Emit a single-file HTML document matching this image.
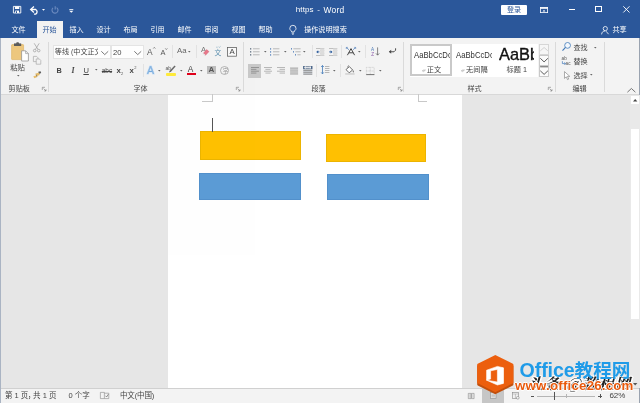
<!DOCTYPE html>
<html lang="zh-CN">
<head>
<meta charset="utf-8">
<title>https - Word</title>
<style>
*{box-sizing:border-box;margin:0;padding:0}
html,body{width:640px;height:403px;overflow:hidden;background:#e6e6e6}
body{position:relative;font-family:"Liberation Sans","Noto Sans CJK SC",sans-serif;font-size:7.1px;color:#444;line-height:1}
.a{position:absolute;white-space:nowrap}
.t{position:absolute;white-space:nowrap;line-height:10px;height:10px}
#title{left:0;top:0;width:640px;height:38px;background:#2b579a}
#ribbon{left:0;top:38px;width:640px;height:57px;background:#f3f3f3;border-bottom:1px solid #d8d8d8}
#doc{left:0;top:95px;width:640px;height:294px;background:#e6e6e6}
#page{left:168px;top:95px;width:294px;height:294px;background:#fff}
#status{left:0;top:388px;width:640px;height:15px;background:#f3f3f3;border-top:1px solid #d0d0d0}
.w{color:#fff}
.sep{position:absolute;top:42px;width:1px;height:50px;background:#dadada}
svg{position:absolute;overflow:visible}
</style>
</head>
<body>
<div id="wrap" style="position:absolute;left:0;top:0;width:640px;height:403px;will-change:transform;opacity:0.999">
<div class="a" id="title"></div>
<div class="a" id="ribbon"></div>
<div class="a" id="doc"></div>
<div class="a" id="page"></div>
<div class="a" id="status"></div>

<!-- TITLE BAR -->
<div class="t w" style="left:295.8px;top:4.8px;font-size:8px;letter-spacing:0.1px">https</div><div class="t w" style="left:317.2px;top:4.6px;font-size:8px">-</div><div class="t w" style="left:323.6px;top:4.8px;font-size:8.4px;letter-spacing:0.2px">Word</div>
<div class="a" style="left:501px;top:5px;width:26px;height:9.7px;background:#fff;border-radius:1px"></div>
<div class="t" style="left:506.9px;top:5px;color:#2b579a">登录</div>


<!-- window border -->
<div class="a" style="left:0;top:38px;width:1px;height:365px;background:#aab4c3"></div>
<div class="a" style="left:639px;top:38px;width:1px;height:365px;background:#9aa3b0"></div>
<!-- TITLE ICONS -->
<svg style="left:12.7px;top:6px" width="8.2" height="7.4" viewBox="0 0 8.2 7.4"><path d="M0.4 0.4H7.8V7H0.4Z" fill="#2b579a" stroke="#fff" stroke-width="0.9"/><rect x="1.9" y="0.4" width="4.4" height="2.6" fill="#fff"/><rect x="2.2" y="4.6" width="3.8" height="2.4" fill="#fff"/><rect x="3" y="5.2" width="1" height="1.8" fill="#2b579a"/></svg>
<svg style="left:29.8px;top:6px" width="9.9" height="8.8" viewBox="0 0 9 8"><path d="M1 3.2H5.2A2.4 2.4 0 0 1 5.2 7.4H3.6" fill="none" stroke="#fff" stroke-width="1.2"/><path d="M3.6 0.4L0.6 3.2L3.6 6" fill="none" stroke="#fff" stroke-width="1.2"/></svg>
<svg style="left:41.6px;top:8.5px" width="3" height="2" viewBox="0 0 3 2"><path d="M0 0H3L1.5 1.8Z" fill="#fff"/></svg>
<svg style="left:51.3px;top:6.3px" width="8" height="8" viewBox="0 0 8 8"><path d="M5.6 1.6A3 3 0 1 1 2 1.9" fill="none" stroke="#6e8cc0" stroke-width="1.1"/><path d="M4.2 0.2V3.4" stroke="#6e8cc0" stroke-width="1.1"/></svg>
<svg style="left:69.3px;top:8.6px" width="4.6" height="4" viewBox="0 0 4.6 4"><rect x="0.3" y="0" width="4" height="0.8" fill="#fff"/><path d="M0.2 1.7H4.4L2.3 3.8Z" fill="#fff"/></svg>
<!-- ribbon display -->
<svg style="left:540.4px;top:6.5px" width="8" height="6" viewBox="0 0 8 6"><rect x="0.4" y="0.4" width="7.2" height="5.2" fill="none" stroke="#fff" stroke-width="0.8"/><rect x="0.4" y="0.4" width="7.2" height="1.4" fill="#fff"/><path d="M2.6 4.4L4 2.8L5.4 4.4Z" fill="#fff"/></svg>
<div class="a" style="left:568.5px;top:9.4px;width:6.2px;height:0.9px;background:#fff"></div>
<div class="a" style="left:595.2px;top:6px;width:6.6px;height:6.4px;border:0.9px solid #fff"></div>
<svg style="left:622.8px;top:6.4px" width="6.8" height="6.8" viewBox="0 0 6.8 6.8"><path d="M0.3 0.3L6.5 6.5M6.5 0.3L0.3 6.5" stroke="#fff" stroke-width="0.9"/></svg>
<!-- lightbulb -->
<svg style="left:288.8px;top:25px" width="8" height="10" viewBox="0 0 8 10"><path d="M2.6 7V6.2C1.4 5.4 0.8 4.6 0.8 3.4A3.1 3.1 0 0 1 7 3.4C7 4.6 6.4 5.4 5.2 6.2V7Z" fill="none" stroke="#fff" stroke-width="0.8"/><path d="M2.7 8.2H5.1M3.1 9.3H4.7" stroke="#fff" stroke-width="0.7"/></svg>
<!-- share -->
<svg style="left:601.3px;top:25.6px" width="8" height="8.6" viewBox="0 0 8 8.6"><circle cx="4.3" cy="2.6" r="2.1" fill="none" stroke="#fff" stroke-width="0.8"/><path d="M0.6 8.4C0.8 6 2.2 5 4 5" fill="none" stroke="#fff" stroke-width="0.8"/><path d="M5 5.2L7.6 8.2" stroke="#fff" stroke-width="0.8"/></svg>

<!-- TABS -->
<div class="a" style="left:36.5px;top:21px;width:26px;height:18px;background:#f3f3f3"></div>
<div class="t w" style="left:11.4px;top:24.5px">文件</div>
<div class="t" style="left:42.4px;top:24.5px;color:#2b579a">开始</div>
<div class="t w" style="left:69.4px;top:24.5px">插入</div>
<div class="t w" style="left:96.4px;top:24.5px">设计</div>
<div class="t w" style="left:123.4px;top:24.5px">布局</div>
<div class="t w" style="left:150.4px;top:24.5px">引用</div>
<div class="t w" style="left:177.4px;top:24.5px">邮件</div>
<div class="t w" style="left:204.4px;top:24.5px">审阅</div>
<div class="t w" style="left:231.4px;top:24.5px">视图</div>
<div class="t w" style="left:258.4px;top:24.5px">帮助</div>
<div class="t w" style="left:304.2px;top:24.5px">操作说明搜索</div>
<div class="t w" style="left:612.4px;top:24.5px">共享</div>

<!-- RIBBON LABELS -->
<div class="t" style="left:8.6px;top:84px">剪贴板</div>
<div class="t" style="left:133.4px;top:84px">字体</div>
<div class="t" style="left:311.4px;top:84px">段落</div>
<div class="t" style="left:467.4px;top:84px">样式</div>
<div class="t" style="left:572.4px;top:84px">编辑</div>
<div class="sep" style="left:48px"></div>
<div class="sep" style="left:243px"></div>
<div class="sep" style="left:403px"></div>
<div class="sep" style="left:555px"></div>
<div class="sep" style="left:604px"></div>

<!-- CLIPBOARD -->
<div class="t" style="left:10.2px;top:62.8px;font-size:7.4px">粘贴</div>


<!-- paste icon -->
<svg style="left:10px;top:42.2px" width="19" height="20" viewBox="0 0 19 20"><rect x="1.6" y="2.6" width="12" height="15" rx="0.6" fill="#eec77e" stroke="#dcae58" stroke-width="0.6"/><rect x="4" y="1.4" width="7.2" height="2.6" fill="#5b5b5b"/><rect x="6.2" y="0.3" width="2.8" height="2" rx="0.9" fill="#5b5b5b"/><path d="M11.6 8.8H15.6L18.4 11.6V19H11.6Z" fill="#fff" stroke="#8a8a8a" stroke-width="0.7"/><path d="M15.6 8.8V11.6H18.4" fill="none" stroke="#8a8a8a" stroke-width="0.6"/></svg>
<svg style="left:16.7px;top:75.2px" width="2.6" height="1.6" viewBox="0 0 2.6 1.6"><path d="M0 0H2.6L1.3 1.6Z" fill="#666"/></svg>
<!-- cut -->
<svg style="left:33.2px;top:42.8px" width="7.4" height="9.4" viewBox="0 0 7.4 9.4"><path d="M1.2 0.3L5 6.4M6.2 0.3L2.4 6.4" stroke="#9a9a9a" stroke-width="0.7"/><circle cx="1.7" cy="7.6" r="1.3" fill="none" stroke="#9a9a9a" stroke-width="0.7"/><circle cx="5.7" cy="7.6" r="1.3" fill="none" stroke="#9a9a9a" stroke-width="0.7"/></svg>
<!-- copy -->
<svg style="left:32.8px;top:56.2px" width="8.4" height="8.6" viewBox="0 0 8.4 8.6"><path d="M0.4 0.4H3.6L5 1.8V5.6H0.4Z" fill="#f3f3f3" stroke="#a8a8a8" stroke-width="0.7"/><path d="M3.2 3H6.4L7.8 4.4V8.2H3.2Z" fill="#f3f3f3" stroke="#a8a8a8" stroke-width="0.7"/></svg>
<!-- format painter -->
<svg style="left:32.8px;top:70.6px" width="8.6" height="7.4" viewBox="0 0 8.6 7.4"><path d="M5.2 0.8L7.6 0.2L8.2 2L6 3Z" fill="#5f5f5f"/><path d="M2.4 2.6L6 1.8L6.8 4L3.4 5.2Z" fill="#e8bd6a"/><path d="M0.4 5.2L3.6 4.2L4.4 6L1.2 7.2Z" fill="#e8bd6a"/><path d="M3.2 3.6L4 5.6" stroke="#5f5f5f" stroke-width="0.6"/></svg>
<svg style="left:41.5px;top:87.2px" width="4.6" height="4.6" viewBox="0 0 4.6 4.6"><path d="M0.3 3V0.3H3" fill="none" stroke="#777" stroke-width="0.6"/><path d="M1.6 1.6L4 4M4 2.2V4H2.2" fill="none" stroke="#777" stroke-width="0.6"/></svg>
<!-- FONT GROUP -->
<div class="a" style="left:53.4px;top:45.2px;width:57.6px;height:13.4px;background:#fff;border:0.6px solid #e4e4e4"></div>
<div class="a" style="left:111px;top:45.2px;width:32.8px;height:13.4px;background:#fff;border:0.6px solid #e4e4e4"></div>
<div class="t" style="left:54.8px;top:47.4px;width:43.2px;overflow:hidden">等线 (中文正文)</div>
<div class="t" style="left:113px;top:47.7px;font-size:7.6px">20</div>

<svg style="left:101.2px;top:50.9px" width="7.5" height="4" viewBox="0 0 7.5 4"><path d="M0.3 0.3L3.75 3.6L7.2 0.3" fill="none" stroke="#555" stroke-width="0.8"/></svg><svg style="left:133.6px;top:50.9px" width="7.5" height="4" viewBox="0 0 7.5 4"><path d="M0.3 0.3L3.75 3.6L7.2 0.3" fill="none" stroke="#555" stroke-width="0.8"/></svg>
<!-- grow / shrink -->
<div class="t" style="left:147px;top:47px;font-size:8.4px;color:#555">A</div>
<svg style="left:152.6px;top:47.4px" width="2.6" height="1.8" viewBox="0 0 2.6 1.8"><path d="M0.2 1.6L1.3 0.3L2.4 1.6" fill="none" stroke="#555" stroke-width="0.6"/></svg>
<div class="t" style="left:160.4px;top:47.6px;font-size:7.4px;color:#555">A</div>
<svg style="left:165.2px;top:47.6px" width="2.6" height="1.8" viewBox="0 0 2.6 1.8"><path d="M0.2 0.3L1.3 1.6L2.4 0.3" fill="none" stroke="#555" stroke-width="0.6"/></svg>
<div class="a" style="left:172px;top:45px;width:1px;height:13px;background:#e2e2e2"></div>
<div class="t" style="left:177px;top:46.4px;font-size:7.8px;color:#666">Aa</div>
<svg style="left:188.1px;top:50.800000000000004px" width="2.6" height="1.6" viewBox="0 0 2.6 1.6"><path d="M0 0H2.6L1.3 1.6Z" fill="#666"/></svg>
<div class="a" style="left:196px;top:45px;width:1px;height:13px;background:#e2e2e2"></div>
<!-- clear formatting -->
<div class="t" style="left:201px;top:45.4px;font-size:7.6px;color:#777">A</div>
<svg style="left:203.4px;top:48.6px" width="6.4" height="6.6" viewBox="0 0 6.4 6.6"><path d="M3.6 0.6L6 2.6L2.6 6.2L0.4 4.2Z" fill="#e8788a" stroke="#d4566c" stroke-width="0.4"/><path d="M0.4 4.2L2.6 6.2L1.8 6.4L0.3 5.2Z" fill="#fff" stroke="#c0c0c0" stroke-width="0.3"/></svg>
<!-- pinyin -->
<div class="t" style="left:214.6px;top:47.6px;font-size:6.8px;color:#5a8fae">文</div>
<svg style="left:216px;top:46.4px" width="5" height="2" viewBox="0 0 5 2"><path d="M0.2 1.2H1.6M2.6 0.8L3.4 1.4L4.6 0.3" fill="none" stroke="#5a8fae" stroke-width="0.5"/></svg>
<!-- char border -->
<svg style="left:227.2px;top:47px" width="9.8" height="9.6" viewBox="0 0 9.8 9.6"><rect x="0.4" y="0.4" width="9" height="8.8" fill="#fafafa" stroke="#5a5a5a" stroke-width="0.75"/></svg>
<div class="t" style="left:229.4px;top:47px;font-size:7.8px;color:#444">A</div>
<!-- row 2 -->
<div class="t" style="left:56.6px;top:65.7px;font-size:7.3px;font-weight:bold;color:#444">B</div>
<div class="t" style="left:71.6px;top:65.7px;font-size:7.8px;font-style:italic;font-weight:bold;color:#444;font-family:'Liberation Serif',serif">I</div>
<div class="t" style="left:83.4px;top:65.5px;font-size:7.6px;color:#444;text-decoration:underline;text-underline-offset:0.6px">U</div>
<svg style="left:94.9px;top:69.4px" width="2.6" height="1.6" viewBox="0 0 2.6 1.6"><path d="M0 0H2.6L1.3 1.6Z" fill="#666"/></svg>
<div class="t" style="left:101.8px;top:65.6px;font-size:6.4px;color:#444;text-decoration:line-through">abc</div>
<div class="t" style="left:116.6px;top:65.7px;font-size:7.8px;font-weight:bold;color:#444">x</div>
<div class="t" style="left:121px;top:68.6px;font-size:4px;color:#555">2</div>
<div class="t" style="left:129.6px;top:65.7px;font-size:7.8px;font-weight:bold;color:#444">x</div>
<div class="t" style="left:134.2px;top:63.4px;font-size:4px;color:#555">2</div>
<div class="a" style="left:142.6px;top:64px;width:1px;height:13px;background:#e2e2e2"></div>
<!-- text effects -->
<svg style="left:145.4px;top:64.6px" width="11" height="11" viewBox="0 0 11 11"><text x="5.5" y="9.3" text-anchor="middle" font-family="Liberation Sans, sans-serif" font-size="10.6" fill="#d6e6f6" stroke="#d6e6f6" stroke-width="1.6" stroke-linejoin="round">A</text><text x="5.5" y="9.3" text-anchor="middle" font-family="Liberation Sans, sans-serif" font-size="10.6" fill="#8db9e4" stroke="#5f9ad4" stroke-width="0.2">A</text></svg>
<svg style="left:157.89999999999998px;top:69.60000000000001px" width="2.6" height="1.6" viewBox="0 0 2.6 1.6"><path d="M0 0H2.6L1.3 1.6Z" fill="#666"/></svg>
<!-- highlight -->
<div class="t" style="left:165.6px;top:63px;font-size:5px;color:#555">ab</div>
<svg style="left:167.6px;top:65px" width="8" height="8" viewBox="0 0 8 8"><path d="M6.6 0.4L7.6 1.4L3.2 6.4L1.8 5.4Z" fill="#6a6a6a"/><path d="M1.8 5.4L3.2 6.4L1.2 7.4Z" fill="#444"/></svg>
<div class="a" style="left:165.8px;top:73.4px;width:9.8px;height:2.2px;background:#ffeb3b;border-radius:1px"></div>
<svg style="left:179.5px;top:69.60000000000001px" width="2.6" height="1.6" viewBox="0 0 2.6 1.6"><path d="M0 0H2.6L1.3 1.6Z" fill="#666"/></svg>
<!-- font color -->
<div class="t" style="left:187.8px;top:63.6px;font-size:8.4px;color:#444">A</div>
<div class="a" style="left:186.6px;top:72.8px;width:9.4px;height:2.2px;background:#e0001b"></div>
<svg style="left:199.89999999999998px;top:69.60000000000001px" width="2.6" height="1.6" viewBox="0 0 2.6 1.6"><path d="M0 0H2.6L1.3 1.6Z" fill="#666"/></svg>
<!-- char shading -->
<div class="a" style="left:207.4px;top:66px;width:8.2px;height:8.4px;background:#bdbdbd"></div>
<div class="t" style="left:208.6px;top:65.2px;font-size:8px;font-weight:bold;color:#555">A</div>
<!-- enclosed char -->
<svg style="left:220.2px;top:65.8px" width="9" height="9" viewBox="0 0 9 9"><circle cx="4.5" cy="4.5" r="4" fill="none" stroke="#9a9a9a" stroke-width="0.7"/></svg>
<div class="t" style="left:222.8px;top:65.6px;font-size:5.6px;color:#999">字</div>
<svg style="left:236.4px;top:87.2px" width="4.6" height="4.6" viewBox="0 0 4.6 4.6"><path d="M0.3 3V0.3H3" fill="none" stroke="#777" stroke-width="0.6"/><path d="M1.6 1.6L4 4M4 2.2V4H2.2" fill="none" stroke="#777" stroke-width="0.6"/></svg>

<!-- PARAGRAPH row1 -->
<svg style="left:249.8px;top:47.8px" width="10" height="8" viewBox="0 0 10 8"><g fill="#5d6d7e"><rect x="0" y="0.2" width="1.3" height="1.3"/><rect x="0" y="3.2" width="1.3" height="1.3"/><rect x="0" y="6.2" width="1.3" height="1.3"/></g><g fill="#a0a0a0"><rect x="3" y="0.5" width="6.6" height="0.7"/><rect x="3" y="3.5" width="6.6" height="0.7"/><rect x="3" y="6.5" width="6.6" height="0.7"/></g></svg>
<svg style="left:263.5px;top:51.2px" width="2.6" height="1.6" viewBox="0 0 2.6 1.6"><path d="M0 0H2.6L1.3 1.6Z" fill="#666"/></svg>
<svg style="left:270.4px;top:47.8px" width="10" height="8" viewBox="0 0 10 8"><g fill="#4a7ab8"><rect x="0.3" y="0" width="0.8" height="1.8"/><rect x="0.3" y="3" width="0.8" height="1.8"/><rect x="0.3" y="6" width="0.8" height="1.8"/></g><g fill="#a0a0a0"><rect x="3" y="0.5" width="6.4" height="0.7"/><rect x="3" y="3.5" width="6.4" height="0.7"/><rect x="3" y="6.5" width="6.4" height="0.7"/></g></svg>
<svg style="left:283.7px;top:51.2px" width="2.6" height="1.6" viewBox="0 0 2.6 1.6"><path d="M0 0H2.6L1.3 1.6Z" fill="#666"/></svg>
<svg style="left:290.8px;top:47.8px" width="10" height="8" viewBox="0 0 10 8"><g fill="#4a7ab8"><rect x="0.2" y="0" width="0.8" height="1.6"/><rect x="2.2" y="3" width="0.8" height="1.6"/><rect x="4.2" y="6" width="0.8" height="1.6"/></g><g fill="#a0a0a0"><rect x="2.4" y="0.5" width="7.2" height="0.7"/><rect x="4.4" y="3.5" width="5.2" height="0.7"/><rect x="6.4" y="6.5" width="3.2" height="0.7"/></g></svg>
<svg style="left:303.09999999999997px;top:51.2px" width="2.6" height="1.6" viewBox="0 0 2.6 1.6"><path d="M0 0H2.6L1.3 1.6Z" fill="#666"/></svg><div class="a" style="left:311.6px;top:45px;width:1px;height:13px;background:#e2e2e2"></div>
<!-- indent dec/inc -->
<svg style="left:315.8px;top:47.8px" width="8.4" height="8" viewBox="0 0 8.4 8"><g fill="#a8a8a8"><rect x="0" y="0" width="8.2" height="0.7"/><rect x="4.2" y="2.4" width="4" height="0.7"/><rect x="4.2" y="4.8" width="4" height="0.7"/><rect x="0" y="7.2" width="8.2" height="0.7"/></g><rect x="4.2" y="0.4" width="4" height="7.2" fill="#dcdcdc"/><path d="M3.4 3.9H0.8" stroke="#2f5f9e" stroke-width="0.9"/><path d="M2.2 2.2L0.3 3.9L2.2 5.6Z" fill="#2f5f9e"/></svg>
<svg style="left:328.8px;top:47.8px" width="8.4" height="8" viewBox="0 0 8.4 8"><g fill="#a8a8a8"><rect x="0" y="0" width="8.2" height="0.7"/><rect x="4.2" y="2.4" width="4" height="0.7"/><rect x="4.2" y="4.8" width="4" height="0.7"/><rect x="0" y="7.2" width="8.2" height="0.7"/></g><rect x="4.2" y="0.4" width="4" height="7.2" fill="#dcdcdc"/><path d="M0.2 3.9H2.8" stroke="#2f5f9e" stroke-width="0.9"/><path d="M1.6 2.2L3.5 3.9L1.6 5.6Z" fill="#2f5f9e"/></svg>
<div class="a" style="left:341.4px;top:45px;width:1px;height:13px;background:#e2e2e2"></div>
<!-- asian layout -->
<svg style="left:346.2px;top:47.4px" width="10" height="8.6" viewBox="0 0 10 8.6"><path d="M1.4 8.2L5 1.6L8.6 8.2M2.8 5.8H7.2" fill="none" stroke="#444" stroke-width="1"/><path d="M0.4 0.6L3 2.8M9.6 0.6L7 2.8" stroke="#4a7ab8" stroke-width="0.7"/><path d="M0.3 2V0.4H1.9M9.7 2V0.4H8.1" fill="none" stroke="#4a7ab8" stroke-width="0.6"/></svg>
<svg style="left:358.3px;top:51.2px" width="2.6" height="1.6" viewBox="0 0 2.6 1.6"><path d="M0 0H2.6L1.3 1.6Z" fill="#666"/></svg><div class="a" style="left:365.4px;top:45px;width:1px;height:13px;background:#e2e2e2"></div>
<!-- sort -->
<svg style="left:371.2px;top:47.4px" width="9" height="9" viewBox="0 0 9 9"><text x="0" y="3.8" font-family="Liberation Sans, sans-serif" font-size="4.6" fill="#4a7ab8">A</text><text x="0.2" y="8.6" font-family="Liberation Sans, sans-serif" font-size="4.6" fill="#8a5aa8">Z</text><path d="M6.6 0.4V8M5 6.4L6.6 8.2L8.2 6.4" fill="none" stroke="#555" stroke-width="0.7"/></svg>
<!-- show marks -->
<svg style="left:388.4px;top:48.4px" width="8.4" height="6.6" viewBox="0 0 8.4 6.6"><path d="M7.6 0.3V2.2L6 3.8H1.4" fill="none" stroke="#4a4a4a" stroke-width="1"/><path d="M3.2 1.8L0.8 3.8L3.2 5.8Z" fill="#4a4a4a"/></svg>
<!-- PARAGRAPH row2 -->
<div class="a" style="left:248px;top:63.6px;width:13.4px;height:14px;background:#c8c8c8"></div>
<svg style="left:250.8px;top:67.4px" width="8" height="7.6" viewBox="0 0 8 7.6"><rect x="0" y="0.00" width="8" height="0.7" fill="#7d7d7d"/><rect x="0" y="1.90" width="5.4" height="0.7" fill="#7d7d7d"/><rect x="0" y="3.80" width="8" height="0.7" fill="#7d7d7d"/><rect x="0" y="5.70" width="5.4" height="0.7" fill="#7d7d7d"/></svg>
<svg style="left:264px;top:67.4px" width="8" height="7" viewBox="0 0 8 7"><g fill="#9c9c9c"><rect x="0" y="0" width="8" height="0.7"/><rect x="1.4" y="1.9" width="5.2" height="0.7"/><rect x="0" y="3.8" width="8" height="0.7"/><rect x="1.4" y="5.7" width="5.2" height="0.7"/></g></svg>
<svg style="left:277.4px;top:67.4px" width="8" height="7" viewBox="0 0 8 7"><g fill="#9c9c9c"><rect x="0" y="0" width="8" height="0.7"/><rect x="2.6" y="1.9" width="5.4" height="0.7"/><rect x="0" y="3.8" width="8" height="0.7"/><rect x="2.6" y="5.7" width="5.4" height="0.7"/></g></svg>
<svg style="left:290.4px;top:66.6px" width="8.2" height="8" viewBox="0 0 8.2 8"><rect x="0" y="0" width="8.2" height="8" fill="#dadada"/><g fill="#a6a6a6"><rect x="0.2" y="0.8" width="7.8" height="0.8"/><rect x="0.2" y="2.7" width="7.8" height="0.8"/><rect x="0.2" y="4.6" width="7.8" height="0.8"/><rect x="0.2" y="6.5" width="7.8" height="0.8"/></g></svg>
<svg style="left:303.2px;top:66px" width="9.6" height="8.8" viewBox="0 0 9.6 8.8"><rect x="0.2" y="0" width="9.2" height="8.8" fill="#c9cdd3"/><rect x="0.2" y="0" width="9.2" height="3.2" fill="#8b99ab"/><rect x="0.4" y="0" width="0.9" height="3" fill="#34557f"/><rect x="8.3" y="0" width="0.9" height="3" fill="#34557f"/><path d="M1.6 1.5H8M2.8 0.5L1.6 1.5L2.8 2.5M6.8 0.5L8 1.5L6.8 2.5" fill="none" stroke="#fff" stroke-width="0.7"/><g fill="#8f8f8f"><rect x="0.4" y="4" width="8.8" height="0.8"/><rect x="0.4" y="5.9" width="8.8" height="0.8"/><rect x="0.4" y="7.8" width="8.8" height="0.8"/></g></svg>
<div class="a" style="left:316.4px;top:64px;width:1px;height:13px;background:#e2e2e2"></div>
<!-- line spacing -->
<svg style="left:320.8px;top:65.4px" width="8.6" height="9.4" viewBox="0 0 8.6 9.4"><path d="M1.5 0.6V8.8M0.2 2L1.5 0.5L2.8 2M0.2 7.4L1.5 8.9L2.8 7.4" fill="none" stroke="#3f78b8" stroke-width="0.8"/><g fill="#9c9c9c"><rect x="4" y="1.2" width="4.4" height="0.7"/><rect x="4" y="3.2" width="4.4" height="0.7"/><rect x="4" y="5.2" width="4.4" height="0.7"/><rect x="4" y="7.2" width="4.4" height="0.7"/></g></svg>
<svg style="left:332.7px;top:69.60000000000001px" width="2.6" height="1.6" viewBox="0 0 2.6 1.6"><path d="M0 0H2.6L1.3 1.6Z" fill="#666"/></svg><div class="a" style="left:339.8px;top:64px;width:1px;height:13px;background:#e2e2e2"></div>
<!-- shading bucket -->
<svg style="left:345.4px;top:65.2px" width="10" height="9.8" viewBox="0 0 10 9.8"><path d="M3.6 0.4C2.6 1.2 2.8 2.6 3.6 3.4" fill="none" stroke="#555" stroke-width="0.7"/><path d="M1 4.6L4.4 1.6L7.6 5L4.2 7.8Z" fill="#fff" stroke="#555" stroke-width="0.85"/><path d="M8 5C8.9 6.2 9.1 7.2 8.4 7.6C7.7 7.4 7.5 6.2 8 5Z" fill="#666"/><rect x="0.2" y="8.2" width="9.4" height="1.5" fill="#d0d0d0"/></svg>
<svg style="left:358.7px;top:69.60000000000001px" width="2.6" height="1.6" viewBox="0 0 2.6 1.6"><path d="M0 0H2.6L1.3 1.6Z" fill="#666"/></svg>
<!-- borders -->
<svg style="left:365.8px;top:66.6px" width="8.6" height="8.2" viewBox="0 0 8.6 8.2"><rect x="0.4" y="0.4" width="7.8" height="7.2" fill="none" stroke="#bdbdbd" stroke-width="0.6" stroke-dasharray="0.8 0.6"/><path d="M4.3 0.4V7.6M0.4 4H8.2" stroke="#bdbdbd" stroke-width="0.6" stroke-dasharray="0.8 0.6"/><rect x="0.2" y="7.2" width="8.2" height="0.9" fill="#666"/></svg>
<svg style="left:379.09999999999997px;top:69.60000000000001px" width="2.6" height="1.6" viewBox="0 0 2.6 1.6"><path d="M0 0H2.6L1.3 1.6Z" fill="#666"/></svg><svg style="left:398px;top:87.2px" width="4.6" height="4.6" viewBox="0 0 4.6 4.6"><path d="M0.3 3V0.3H3" fill="none" stroke="#777" stroke-width="0.6"/><path d="M1.6 1.6L4 4M4 2.2V4H2.2" fill="none" stroke="#777" stroke-width="0.6"/></svg>
<!-- STYLES -->
<div class="a" style="left:410px;top:43.5px;width:128px;height:33.5px;background:#fff"></div>
<div class="a" style="left:410px;top:44px;width:41.6px;height:31.8px;border:2px solid #c9c9c9;background:#fff"></div>
<div class="t" style="left:413.6px;top:50px;font-size:9.2px;color:#333;width:36px;overflow:hidden"><span style="display:inline-block;transform:scaleX(0.84);transform-origin:0 50%">AaBbCcDc</span></div>
<div class="t" style="left:456.2px;top:50px;font-size:9.2px;color:#333;width:35.6px;overflow:hidden"><span style="display:inline-block;transform:scaleX(0.84);transform-origin:0 50%">AaBbCcDc</span></div>
<div class="t" style="left:499px;top:45.4px;font-size:16.4px;line-height:18px;height:18px;color:#111;width:35px;overflow:hidden;-webkit-text-stroke:0.35px #111">AaBb</div>
<div class="t" style="left:426.8px;top:64.6px;font-size:7.2px">正文</div>
<div class="t" style="left:466px;top:64.6px;font-size:7.2px">无间隔</div>
<div class="t" style="left:506.6px;top:64.8px;font-size:7.2px">标题 1</div>


<!-- style gallery scroll -->
<div class="a" style="left:538.6px;top:44px;width:10.2px;height:10.6px;border:0.6px solid #d6d6d6;background:#f6f6f6"></div>
<div class="a" style="left:538.6px;top:55.2px;width:10.2px;height:10.4px;border:0.6px solid #c9c9c9;background:#fbfbfb"></div>
<div class="a" style="left:538.6px;top:66.2px;width:10.2px;height:10.6px;border:0.6px solid #c9c9c9;background:#fbfbfb"></div>
<svg style="left:539.6px;top:46.6px" width="8.2" height="4.2" viewBox="0 0 8.2 4.2"><path d="M0.3 3.9L4.1 0.5L7.9 3.9" fill="none" stroke="#c8c8c8" stroke-width="0.8"/></svg>
<svg style="left:539.6px;top:58.2px" width="8.2" height="4.4" viewBox="0 0 8.2 4.4"><path d="M0.3 0.3L4.1 3.9L7.9 0.3" fill="none" stroke="#4a4a4a" stroke-width="0.9"/></svg>
<svg style="left:539.6px;top:66.4px" width="8.2" height="9" viewBox="0 0 8.2 9"><rect x="0.2" y="0" width="7.8" height="1.4" fill="#8a8a8a"/><path d="M0.3 4.8L4.1 8.4L7.9 4.8" fill="none" stroke="#4a4a4a" stroke-width="0.9"/></svg>
<!-- para marks -->
<svg style="left:421.8px;top:69.4px" width="3.4" height="3" viewBox="0 0 3.4 3"><path d="M3 0.2V1.8H0.6M1.6 0.8L0.5 1.8L1.6 2.8" fill="none" stroke="#8a8a8a" stroke-width="0.5"/></svg>
<svg style="left:460.8px;top:69.4px" width="3.4" height="3" viewBox="0 0 3.4 3"><path d="M3 0.2V1.8H0.6M1.6 0.8L0.5 1.8L1.6 2.8" fill="none" stroke="#8a8a8a" stroke-width="0.5"/></svg>
<svg style="left:548px;top:87.2px" width="4.6" height="4.6" viewBox="0 0 4.6 4.6"><path d="M0.3 3V0.3H3" fill="none" stroke="#777" stroke-width="0.6"/><path d="M1.6 1.6L4 4M4 2.2V4H2.2" fill="none" stroke="#777" stroke-width="0.6"/></svg>
<!-- EDITING -->
<!-- find -->
<svg style="left:562px;top:42.2px" width="9.2" height="9.2" viewBox="0 0 9.2 9.2"><circle cx="5.6" cy="3.4" r="2.9" fill="#f3f8fd" stroke="#3f78b8" stroke-width="0.8"/><path d="M3.5 5.5L0.5 8.6" stroke="#3f78b8" stroke-width="1.1"/></svg>
<svg style="left:593.9000000000001px;top:46.800000000000004px" width="2.6" height="1.6" viewBox="0 0 2.6 1.6"><path d="M0 0H2.6L1.3 1.6Z" fill="#666"/></svg>
<!-- replace -->
<div class="t" style="left:561.6px;top:54.2px;font-size:4.6px;color:#555">ab</div>
<div class="t" style="left:565.6px;top:59.4px;font-size:4.6px;color:#555">ac</div>
<svg style="left:561.6px;top:60.6px" width="4.2" height="4.2" viewBox="0 0 4.2 4.2"><path d="M0.4 0.2V2.6H3.4M2.4 1.4L3.6 2.6L2.4 3.8" fill="none" stroke="#3f78b8" stroke-width="0.7"/></svg>
<!-- select -->
<svg style="left:563.8px;top:70.8px" width="6.4" height="9" viewBox="0 0 6.4 9"><path d="M0.5 0.6V7.4L2.3 5.8L3.5 8.6L4.7 8.1L3.5 5.4H5.8Z" fill="#fff" stroke="#777" stroke-width="0.6"/></svg>
<svg style="left:590.1px;top:74.4px" width="2.6" height="1.6" viewBox="0 0 2.6 1.6"><path d="M0 0H2.6L1.3 1.6Z" fill="#666"/></svg>
<!-- collapse ribbon -->
<svg style="left:627.4px;top:88.2px" width="8.8" height="4.6" viewBox="0 0 8.8 4.6"><path d="M0.4 4.2L4.4 0.5L8.4 4.2" fill="none" stroke="#555" stroke-width="0.8"/></svg>

<div class="t" style="left:573.4px;top:42.8px">查找</div>
<div class="t" style="left:573.4px;top:56.6px">替换</div>
<div class="t" style="left:573.4px;top:70.8px">选择</div>

<!-- DOC SHAPES -->
<div class="a" style="left:200px;top:131px;width:100.5px;height:28.5px;background:#ffc000;border:0.5px solid #ecb400"></div>
<div class="a" style="left:325.5px;top:134px;width:100.5px;height:27.5px;background:#ffc000;border:0.5px solid #ecb400"></div>
<div class="a" style="left:199px;top:172.5px;width:102px;height:27px;background:#5b9bd5;border:0.5px solid #5290cb"></div>
<div class="a" style="left:327px;top:173.5px;width:102px;height:26.5px;background:#5b9bd5;border:0.5px solid #5290cb"></div>
<div class="a" style="left:212px;top:118px;width:1px;height:14px;background:#555"></div>
<!-- margin marks -->
<div class="a" style="left:202px;top:94px;width:11px;height:8px;border-right:1px solid #c8c8c8;border-bottom:1px solid #c8c8c8"></div>
<div class="a" style="left:417.5px;top:94px;width:9px;height:8px;border-left:1px solid #c8c8c8;border-bottom:1px solid #c8c8c8"></div>

<!-- SCROLLBAR -->
<div class="a" style="left:630px;top:95px;width:10px;height:293px;background:#e9e9e9"></div>
<div class="a" style="left:631px;top:96px;width:8px;height:8px;background:#fff"></div>
<div class="a" style="left:631px;top:128.5px;width:8px;height:190px;background:#fff"></div>


<svg style="left:633px;top:98.8px" width="4.4" height="2.6" viewBox="0 0 4.4 2.6"><path d="M0 2.6L2.2 0L4.4 2.6Z" fill="#444"/></svg>
<svg style="left:632.6px;top:382.8px" width="4.4" height="2.6" viewBox="0 0 4.4 2.6"><path d="M0 0H4.4L2.2 2.6Z" fill="#555"/></svg>
<!-- STATUS -->
<!-- proofing icon -->
<svg style="left:100.4px;top:391.8px" width="9.4" height="7.4" viewBox="0 0 9.4 7.4"><path d="M0.4 0.4H4.4V6.6H0.4Z" fill="none" stroke="#888" stroke-width="0.6"/><path d="M4.4 1.2H8.8V6.6H4.4" fill="none" stroke="#888" stroke-width="0.6"/><path d="M5.6 3.8L6.6 5L8.4 2.2" fill="none" stroke="#666" stroke-width="0.7"/></svg>
<!-- view buttons -->
<div class="a" style="left:482.4px;top:389.4px;width:21.2px;height:13.6px;background:#c6c6c6"></div>
<svg style="left:468px;top:392.6px" width="6.4" height="6" viewBox="0 0 6.4 6"><path d="M0.3 0.4H2.9V5.6H0.3ZM3.5 0.4H6.1V5.6H3.5Z" fill="none" stroke="#888" stroke-width="0.6"/><path d="M0.9 1.8H2.3M0.9 3H2.3M0.9 4.2H2.3M4.1 1.8H5.5M4.1 3H5.5M4.1 4.2H5.5" stroke="#aaa" stroke-width="0.5"/></svg>
<svg style="left:490px;top:392.2px" width="6.4" height="7" viewBox="0 0 6.4 7"><rect x="0.4" y="0.4" width="5.6" height="6.2" fill="#e8e8e8" stroke="#8a8a8a" stroke-width="0.6"/><path d="M1.4 2H5M1.4 3.4H5M1.4 4.8H5" stroke="#999" stroke-width="0.5"/></svg>
<svg style="left:512px;top:392px" width="7.6" height="7.4" viewBox="0 0 7.6 7.4"><rect x="0.4" y="0.4" width="6" height="6" fill="none" stroke="#888" stroke-width="0.6"/><path d="M0.4 2H6.4M3.4 2V6.4" stroke="#999" stroke-width="0.5"/><circle cx="5.8" cy="5.8" r="1.4" fill="#f3f3f3" stroke="#777" stroke-width="0.5"/></svg>
<!-- zoom slider -->
<div class="a" style="left:530.6px;top:395.6px;width:3.2px;height:0.8px;background:#555"></div>
<div class="a" style="left:537.4px;top:395.6px;width:57.6px;height:0.7px;background:#b5b5b5"></div>
<div class="a" style="left:565.6px;top:394.2px;width:0.7px;height:3.6px;background:#b5b5b5"></div>
<div class="a" style="left:553.6px;top:392.4px;width:1.8px;height:7.2px;background:#555"></div>
<div class="a" style="left:598.4px;top:395.6px;width:4px;height:0.8px;background:#555"></div>
<div class="a" style="left:600px;top:394px;width:0.8px;height:4px;background:#555"></div>

<div class="t" style="left:5px;top:391px;font-size:7.5px">第 1 页<span style="margin:0 -2.2px 0 -0.6px">，</span>共 1 页</div>
<div class="t" style="left:68.6px;top:391px;font-size:7.5px">0 个字</div>
<div class="t" style="left:120px;top:391px;font-size:7.5px;letter-spacing:-0.15px">中文(中国)</div>
<div class="t" style="left:609.4px;top:390.8px;font-size:8px">62%</div>


<!-- WATERMARK -->
<div class="t" style="left:528px;top:373px;height:20px;line-height:20px;font-size:15px;color:#222;font-family:'Noto Serif CJK SC','Liberation Serif',serif;font-style:italic;font-weight:bold;text-shadow:-1px -1px 0 #fff,1px -1px 0 #fff,-1px 1px 0 #fff,1px 1px 0 #fff,0 1.4px 0 #fff,0 -1.4px 0 #fff,1.4px 0 0 #fff,-1.4px 0 0 #fff;letter-spacing:1.5px;width:108px;overflow:hidden">头条 @教程网</div>
<svg style="left:476px;top:352px" width="40" height="46" viewBox="0 0 40 46">
<path d="M19.3 5.6L36.4 14.2V32.6L19.3 41.2L2.2 32.6V14.2Z" fill="#c2500d" stroke="#c2500d" stroke-width="2" stroke-linejoin="round"/>
<path d="M19.3 4.1L36.4 12.7V30.4L19.3 39L2.2 30.4V12.7Z" fill="#ec5f0e" stroke="#ec5f0e" stroke-width="2" stroke-linejoin="round"/>
<path d="M10.6 28.2V18.2L21.4 14.4L27.4 15.8V31.4L21.4 33L10.6 28.2L21.4 30V17.4L14.6 18.8V27Z" fill="#fff" stroke="#fff" stroke-width="0.6" stroke-linejoin="round"/>
<rect x="24.8" y="15.8" width="2.6" height="15.6" fill="#fff"/>
</svg>
<div class="t" style="left:519.6px;top:358px;height:24px;line-height:24px;font-size:19.6px;font-weight:bold;color:#1f9be8;letter-spacing:-0.1px">Office<span style="font-size:18.6px;letter-spacing:0">教程网</span></div>
<div class="t" style="left:515px;top:379.4px;height:14px;line-height:14px;font-size:12.4px;font-weight:bold;color:#e8590c;letter-spacing:0.2px;text-shadow:-0.7px 0 0 #fff,0.7px 0 0 #fff,0 0.7px 0 #fff,0 -0.7px 0 #fff"><span style="display:inline-block;transform:scaleX(1.07);transform-origin:0 50%">www.office26.com</span></div>
</div>
</body>
</html>
